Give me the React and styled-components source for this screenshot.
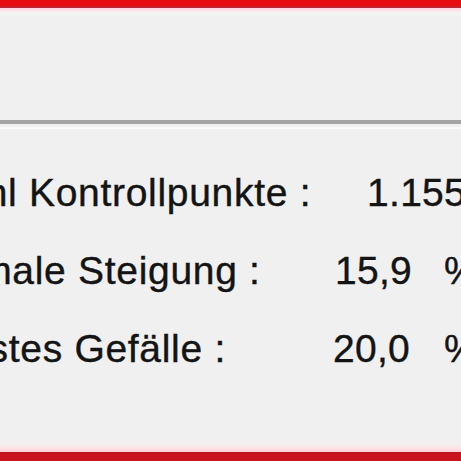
import React from "react";
import styled, { createGlobalStyle } from "styled-components";

const Global = createGlobalStyle`
  html, body { margin: 0; padding: 0; background: #f0f0f0; }
  #root { width: 461px; height: 461px; }
`;

const Frame = styled.div`
  width: 461px;
  height: 461px;
  overflow: hidden;
  display: flex;
  flex-direction: column;
  background: #f0f0f0;
  font-family: "Liberation Sans", Arial, sans-serif;
  color: #141414;
`;

const TopStripe = styled.div`
  flex: 0 0 18px;
  background: linear-gradient(
    to bottom,
    #e40c0c 0px,
    #e40c0c 6px,
    #c22530 6px,
    #c22530 8px,
    #ffd2dc 8px,
    #ffdfe6 10px,
    #fbf0f4 12px,
    #eef6f0 15px,
    #f0f0f0 18px
  );
`;

const Toolbar = styled.div`
  flex: 0 0 102px;
  background: #f0f0f0;
`;

const Divider = styled.div`
  flex: 0 0 9px;
  background: linear-gradient(
    to bottom,
    #a4a4a4 0px,
    #a4a4a4 4px,
    #f0f0f0 4px,
    #f0f0f0 7px,
    #fbfbfb 7px,
    #fbfbfb 9px
  );
`;

const Body = styled.div`
  flex: 1;
  padding-top: 25px;
  display: flex;
  flex-direction: column;
`;

const Row = styled.div`
  display: grid;
  grid-template-columns: 439px 111px auto;
  margin-left: -106px;
  height: 78px;
  line-height: 78px;
  font-size: 39px;
  white-space: nowrap;
  -webkit-text-stroke: 0.4px #141414;
`;

const Label = styled.span`
  letter-spacing: 0.7px;
`;

const Value = styled.span`
  padding-left: ${(p) => p.$indent || 0}px;
  letter-spacing: 0.3px;
`;

const Unit = styled.span``;

const BottomStripe = styled.div`
  flex: 0 0 18px;
  background: linear-gradient(
    to bottom,
    #f0f0f0 0px,
    #fde4e6 5px,
    #ffd0d6 9px,
    #b01a22 9px,
    #b01a22 10px,
    #c8151e 10px,
    #c8151e 18px
  );
`;

const rows = [
  { label: "Anzahl Kontrollpunkte :", value: "1.155", unit: "", indent: 34 },
  { label: "Maximale Steigung :", value: "15,9", unit: "%", indent: 2 },
  { label: "Stärkstes Gefälle :", value: "20,0", unit: "%", indent: 0 },
];

export default function App() {
  return (
    <>
      <Global />
      <Frame>
        <TopStripe />
        <Toolbar />
        <Divider />
        <Body>
          {rows.map((r) => (
            <Row key={r.label}>
              <Label>{r.label}</Label>
              <Value $indent={r.indent}>{r.value}</Value>
              <Unit>{r.unit}</Unit>
            </Row>
          ))}
        </Body>
        <BottomStripe />
      </Frame>
    </>
  );
}
